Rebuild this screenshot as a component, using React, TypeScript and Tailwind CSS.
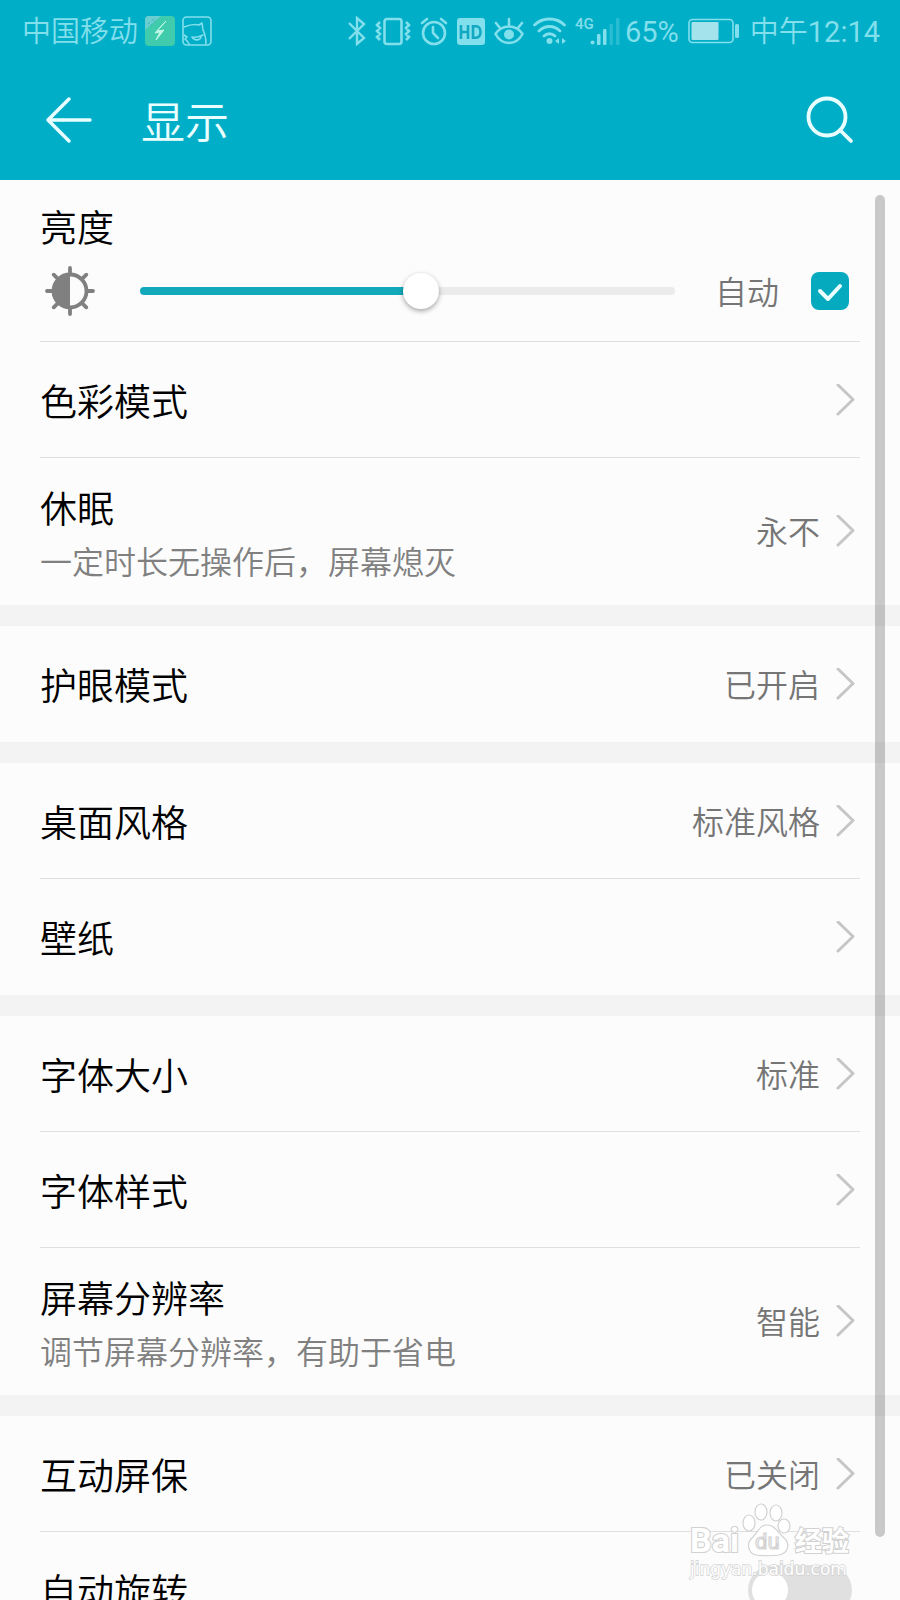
import { useState } from 'react';

type Item = { title: string; note?: string; value?: string };

const groups: Item[][] = [
  [{ title: '护眼模式', value: '已开启' }],
  [{ title: '桌面风格', value: '标准风格' }, { title: '壁纸' }],
  [
    { title: '字体大小', value: '标准' },
    { title: '字体样式' },
    { title: '屏幕分辨率', note: '调节屏幕分辨率，有助于省电', value: '智能' },
  ],
];

function StatusBar() {
  return (
    <div className="flex h-[62px] items-center justify-between px-5 text-[29px] leading-none text-[#82dfec]">
      <div className="flex items-center gap-[7px]">
        <span className="pt-0.5 pl-0.5 font-[350]">中国移动</span>
        <svg className="h-[30px] w-[30px]" viewBox="0 0 30 30">
          <rect width="30" height="30" rx="4" fill="#3fcbac" />
          <path d="M4 0h12L0 14V4a4 4 0 0 1 4-4z" fill="#6bcfd2" />
          <path d="M3 8l7-6M5 10l8-7" stroke="#3fb9bd" strokeWidth="1" strokeDasharray="3 2" />
          <path d="M21 5L12 15l7-1-8 10 4-8-5 1z" fill="#c3f7e6" stroke="#c3f7e6" strokeWidth="1" strokeLinejoin="round" />
        </svg>
        <svg className="h-[30px] w-[30px]" viewBox="0 0 30 30" fill="none" stroke="currentColor" strokeWidth="1.6" strokeLinecap="round" strokeLinejoin="round">
          <rect x="1" y="1" width="28" height="28" rx="3.5" />
          <path d="M2 11c5-2 11-3 15-2l3-2 1 7c2 4 3 9 3 14M2 19l3 2-2 2c2 1 3 3 4 5M10 21c4 1 7 0 11-2M10 21c2 4 9 4 9-1" />
        </svg>
      </div>
      <div className="flex items-center gap-[9px]">
        <svg className="h-[30px] w-[18px]" viewBox="0 0 18 30" fill="none" stroke="currentColor" strokeWidth="2.4">
          <path d="M1 7l15 15-7 6V2l7 6L1 23" />
        </svg>
        <svg className="h-[30px] w-[36px]" viewBox="0 0 36 30" fill="none" stroke="currentColor" strokeWidth="2.6">
          <rect x="9.500" y="3" width="17" height="25" rx="2.500" />
          <path d="M5 6L2 9l3 3-3 3 3 3-3 3 3 3M31 6l3 3-3 3 3 3-3 3 3 3-3 3" />
        </svg>
        <svg className="h-[30px] w-[28px]" viewBox="0 0 28 30" fill="none" stroke="currentColor" strokeWidth="2.6" strokeLinecap="round">
          <circle cx="14" cy="17" r="11" />
          <path d="M2 7l5-4M26 7l-5-4M13 11v6l5 5" />
        </svg>
        <svg className="h-[30px] w-[28px]" viewBox="0 0 28 30">
          <rect y="2" width="28" height="27" rx="3" fill="currentColor" />
          <path d="M4 9v14M4 16h7M11 9v14M16 9v14M16 10.300h3c6 0 6 11.400 0 11.400h-3" fill="none" stroke="#11a9c2" strokeWidth="2.600" />
        </svg>
        <svg className="h-[30px] w-[30px]" viewBox="0 0 30 30" fill="none" stroke="currentColor" strokeWidth="2.600" strokeLinecap="round">
          <path d="M1.500 18C8 8 22 8 28.500 18 22 30 8 30 1.500 18zM15 9V3M6 12L2 7M24 12l4-5" />
          <circle cx="15" cy="18.500" r="5" fill="currentColor" stroke="none" />
        </svg>
        <svg className="h-[30px] w-[33px]" viewBox="0 0 33 30" fill="none" stroke="currentColor" strokeWidth="2.800" strokeLinecap="round">
          <path d="M1.500 9c8-8 22-8 30 0M6 15c6-6 15-6 21 0M11 20c3-3 8-3 11 0" />
          <circle cx="16.500" cy="25" r="3" fill="currentColor" stroke="none" />
          <path d="M26 22v6l-4-3zM29 22v6l4-3z" fill="currentColor" stroke="none" />
        </svg>
        <svg className="h-[30px] w-[45px]" viewBox="0 0 45 30" fill="currentColor">
          <text x="0" y="13" fontSize="15" fontWeight="500">4G</text>
          <circle cx="17.500" cy="26.500" r="2" />
          <rect x="22" y="18" width="3.500" height="11" rx="1" />
          <rect x="28" y="13" width="3.500" height="16" rx="1" />
          <g opacity="0.3">
            <rect x="34.500" y="8" width="3.500" height="21" rx="1" />
            <rect x="41" y="2" width="3.500" height="27" rx="1" />
          </g>
        </svg>
        <span className="-ml-1 pt-0.5">65%</span>
        <svg className="h-[30px] w-[51px]" viewBox="0 0 51 30">
          <rect x="1" y="3.500" width="44" height="23" rx="3.500" fill="none" stroke="currentColor" strokeWidth="1.600" />
          <rect x="3.500" y="6" width="27" height="18" rx="1" fill="#a5e3ec" />
          <rect x="47" y="8" width="4" height="14" rx="1.500" fill="currentColor" />
        </svg>
        <span className="pt-0.5 pl-0.5 font-[350]">中午<span className="font-normal">12:14</span></span>
      </div>
    </div>
  );
}

function Chevron() {
  return (
    <svg className="h-8 w-6 text-[#c6c6c6]" viewBox="0 0 24 32" fill="none" stroke="currentColor" strokeWidth="3" strokeLinecap="round" strokeLinejoin="round">
      <path d="M2 1l15 14.500L2 30" />
    </svg>
  );
}

function Row({ title, note, value }: Item) {
  return (
    <li className="group">
      <a href="#" className="block px-10">
        <div className={`flex items-center justify-between border-b border-[#dfdfdf] group-last:border-transparent ${note ? 'h-[147px]' : 'h-[116px]'}`}>
          <div className="pt-2">
            <div className="text-[37px] leading-[56px] font-[350] text-black">{title}</div>
            {note && <div className="text-[32px] leading-[48px] font-[350] text-[#808080]">{note}</div>}
          </div>
          <div className="flex items-center gap-4">
            {value && <span className="pt-1 text-[32px] leading-[48px] font-[350] text-[#757575]">{value}</span>}
            <Chevron />
          </div>
        </div>
      </a>
    </li>
  );
}

function Watermark() {
  return (
    <svg className="pointer-events-none absolute right-[48px] bottom-[20px] h-[80px] w-[164px]" viewBox="0 0 164 80" fill="#fff" stroke="#d2d2d2" strokeWidth="1.200">
      <g fontWeight="700" style={{ paintOrder: 'stroke' }} strokeWidth="2.200">
        <text x="2" y="52" fontSize="34">Bai</text>
        <text x="107" y="51" fontSize="27">经验</text>
      </g>
      <ellipse cx="61" cy="23" rx="6" ry="8" />
      <ellipse cx="73" cy="12" rx="6" ry="8" />
      <ellipse cx="88" cy="13" rx="6" ry="8" />
      <ellipse cx="96" cy="26" rx="6" ry="7" />
      <path d="M79 25c-8 0-9 8-15 13-5 4-5 15 4 17 5 1 17 1 23 0 10-2 11-12 5-17-6-5-9-13-17-13z" />
      <text x="67" y="49" fontSize="22">du</text>
      <text x="2" y="75" fontSize="17" strokeWidth="1.400" fontFamily="DejaVu Sans, sans-serif" style={{ paintOrder: 'stroke' }}>jingyan.baidu.com</text>
    </svg>
  );
}

export default function App() {
  const [brightness, setBrightness] = useState(527);
  const [auto, setAuto] = useState(true);
  const [rotate, setRotate] = useState(false);
  const fill = `${brightness / 10}%`;

  return (
    <div className="relative h-screen overflow-hidden bg-[#fcfcfc] font-[Roboto,'Noto_Sans_CJK_SC',sans-serif]">
      <header className="bg-[#00aec7]">
        <StatusBar />
        <div className="flex h-[118px] items-center px-[44px] text-[#e9ffff]">
          <button type="button" aria-label="返回">
            <svg className="h-[50px] w-[50px]" viewBox="0 0 50 50" fill="none" stroke="currentColor" strokeWidth="3.500" strokeLinecap="round" strokeLinejoin="round">
              <path d="M46 24H4M25 3L4 24l21 21" />
            </svg>
          </button>
          <h1 className="ml-[47px] flex-1 pt-1.5 text-[44px] leading-[60px] font-[350]">显示</h1>
          <button type="button" aria-label="搜索">
            <svg className="h-[50px] w-[50px]" viewBox="0 0 50 50" fill="none" stroke="currentColor" strokeWidth="3.800" strokeLinecap="round">
              <circle cx="21" cy="21" r="18.500" />
              <path d="M34 34l11 11" />
            </svg>
          </button>
        </div>
      </header>

      <main>
        {/* Brightness */}
        <section className="px-10">
          <div className="h-[162px] border-b border-[#dfdfdf] pt-5">
            <label htmlFor="brightness" className="block pt-1 text-[37px] leading-[52px] font-[350] text-black">亮度</label>
            <div className="flex h-[70px] items-center">
              <svg className="ml-1 h-[52px] w-[52px] shrink-0 text-[#808080]" viewBox="0 0 52 52" fill="none" stroke="currentColor" strokeWidth="3.800" strokeLinecap="round">
                <circle cx="26" cy="26" r="16.500" />
                <path d="M26 9.500a16.500 16.500 0 0 0 0 33z" fill="currentColor" stroke="none" />
                <path d="M26 3v6M26 43v6M3 26h6M43 26h6M9.700 9.700l4 4M38.300 38.300l4 4M9.700 42.300l4-4M38.300 13.700l4-4" />
              </svg>
              <input
                id="brightness"
                type="range"
                min="0"
                max="1000"
                value={brightness}
                onChange={(e) => setBrightness(Number(e.target.value))}
                style={{ '--fill': fill } as React.CSSProperties}
                className="mr-10 ml-11 h-9 min-w-0 flex-1 appearance-none bg-transparent [&::-webkit-slider-runnable-track]:h-2 [&::-webkit-slider-runnable-track]:rounded-full [&::-webkit-slider-runnable-track]:bg-[linear-gradient(to_right,#12a9bb_var(--fill),#ebebeb_var(--fill))] [&::-webkit-slider-thumb]:-mt-[14px] [&::-webkit-slider-thumb]:h-9 [&::-webkit-slider-thumb]:w-9 [&::-webkit-slider-thumb]:appearance-none [&::-webkit-slider-thumb]:rounded-full [&::-webkit-slider-thumb]:bg-white [&::-webkit-slider-thumb]:shadow-[0_2px_5px_rgba(0,0,0,0.35)]"
              />
              <label htmlFor="auto" className="pt-1 text-[32px] leading-[48px] font-[350] text-[#757575]">自动</label>
              <span className="relative mr-[11px] ml-8 h-[38px] w-[38px]">
                <input
                  id="auto"
                  type="checkbox"
                  checked={auto}
                  onChange={(e) => setAuto(e.target.checked)}
                  className="block h-full w-full appearance-none rounded-lg bg-[#d0d0d0] checked:bg-[#06aabf]"
                />
                <svg className="pointer-events-none absolute inset-0" viewBox="0 0 38 38" fill="none" stroke="#e9ffff" strokeWidth="4" strokeLinecap="round" strokeLinejoin="round">
                  <path d="M9 19l8 8 12-13" />
                </svg>
              </span>
            </div>
          </div>
        </section>

        <ul>
          <Row title="色彩模式" />
          <Row title="休眠" note="一定时长无操作后，屏幕熄灭" value="永不" />
        </ul>

        {groups.map((items) => (
          <ul key={items[0].title} className="border-t-[21px] border-[#f3f3f3]">
            {items.map((item) => (
              <Row key={item.title} {...item} />
            ))}
          </ul>
        ))}

        <ul className="border-t-[21px] border-[#f3f3f3]">
          <li>
            <a href="#" className="block px-10">
              <div className="flex h-[116px] items-center justify-between border-b border-[#dfdfdf]">
                <div className="pt-2 text-[37px] leading-[56px] font-[350] text-black">互动屏保</div>
                <div className="flex items-center gap-4">
                  <span className="pt-1 text-[32px] leading-[48px] font-[350] text-[#757575]">已关闭</span>
                  <Chevron />
                </div>
              </div>
            </a>
          </li>
          <li className="flex h-[116px] items-center justify-between pr-12 pl-10">
            <label htmlFor="rotate" className="pt-2 text-[37px] leading-[56px] font-[350] text-black">自动旋转</label>
            <input
              id="rotate"
              type="checkbox"
              role="switch"
              checked={rotate}
              onChange={(e) => setRotate(e.target.checked)}
              className="flex h-[50px] w-[104px] appearance-none items-center rounded-full bg-[#e0e0e0] px-1 before:h-9 before:w-9 before:rounded-full before:bg-white checked:justify-end checked:bg-[#06aabf]"
            />
          </li>
        </ul>
      </main>

      {/* Scroll thumb */}
      <div className="absolute top-[195px] right-[15px] bottom-[63px] w-[10px] rounded-full bg-black/20" />
      <Watermark />
    </div>
  );
}
